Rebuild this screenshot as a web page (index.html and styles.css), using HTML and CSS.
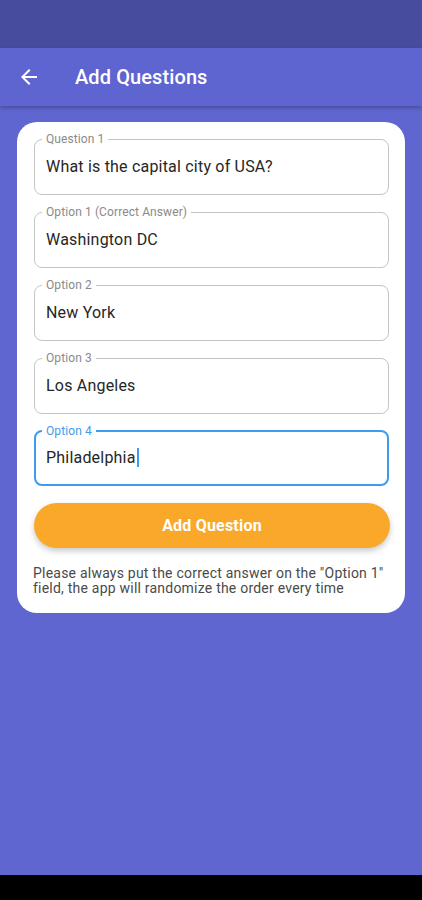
FILE: index.html
```html
<!DOCTYPE html>
<html>
<head>
<meta charset="utf-8">
<link rel="stylesheet" href="styles.css">
</head>
<body>
<div class="screen">
  <div class="statusbar"></div>
  <header class="appbar">
    <svg class="back" width="24" height="24" viewBox="0 0 24 24"><path d="M20 11H7.83l5.59-5.59L12 4l-8 8 8 8 1.41-1.41L7.83 13H20v-2z" fill="#fff"/></svg>
    <h1 class="title">Add Questions</h1>
  </header>
  <main class="content">
    <div class="card">
      <fieldset class="field">
        <legend>Question 1</legend>
        <div class="value">What is the capital city of USA?</div>
      </fieldset>
      <fieldset class="field">
        <legend>Option 1 (Correct Answer)</legend>
        <div class="value">Washington DC</div>
      </fieldset>
      <fieldset class="field">
        <legend>Option 2</legend>
        <div class="value">New York</div>
      </fieldset>
      <fieldset class="field">
        <legend>Option 3</legend>
        <div class="value">Los Angeles</div>
      </fieldset>
      <fieldset class="field focused">
        <legend>Option 4</legend>
        <div class="value">Philadelphia<span class="caret"></span></div>
      </fieldset>
      <button class="add">Add Question</button>
      <p class="help">Please always put the correct answer on the "Option 1" field, the app will randomize the order every time</p>
    </div>
  </main>
  <div class="navbar"></div>
</div>
</body>
</html>
```
FILE: styles.css
```css
* { box-sizing: border-box; }
html, body { margin: 0; padding: 0; }
body { font-family: Roboto, "Liberation Sans", sans-serif; background: #000; }
.screen { width: 422px; height: 900px; display: flex; flex-direction: column; background: #5f66d0; }
.statusbar { height: 48px; background: #474c9f; flex: none; }
.appbar {
  height: 58px; flex: none; background: #5f65d0;
  display: flex; align-items: center; padding-left: 17px;
  box-shadow: 0 2px 4px rgba(0,0,0,0.25);
  position: relative; z-index: 1;
}
.back { width: 24px; height: 24px; flex: none; }
.title { margin: 0 0 0 34px; color: #fff; font-size: 20px; font-weight: 500; letter-spacing: 0.1px; }
.content { flex: 1; padding-top: 16px; }
.card {
  margin: 0 17px; width: 388px; background: #fff; border-radius: 20px;
  padding: 11px 16px 17px 17px;
  display: flex; flex-direction: column;
}
.field {
  margin: 0 0 11px 0; padding: 0 12px 0 7px;
  border: 1px solid #c4c4c4; border-radius: 8px;
  min-width: 0;
}
.field legend {
  font-size: 12px; line-height: 12px; color: #8a8a8a; padding: 0 4px; letter-spacing: 0.1px;
}
.value {
  height: 49px; padding: 12px 0 0 4px;
  font-size: 16px; line-height: 20px; color: #262626; letter-spacing: 0.2px;
}
.field.focused { border: 2px solid #3d9cf0; padding: 0 11px 0 6px; margin-bottom: 16px; }
.field.focused legend { color: #3d9cf0; }
.field.focused .value { height: 47px; padding-top: 11px; }
.caret { display: inline-block; width: 2px; height: 19px; background: #3d9cf0; vertical-align: -4px; margin-left: 1px; }
.add {
  height: 45px; border: none; border-radius: 23px; background: #f9a82a;
  color: #fff; font-family: Roboto, "Liberation Sans", sans-serif;
  font-size: 16px; font-weight: 700; width: 356px; letter-spacing: 0.2px;
  margin-top: 1px;
  box-shadow: 0 3px 6px rgba(0,0,0,0.22);
}
.help { margin: 18px -4px 0 -1px; font-size: 14px; line-height: 15px; color: #4a4a4a; letter-spacing: 0.22px; }
.navbar { height: 25px; background: #000; flex: none; }
```
